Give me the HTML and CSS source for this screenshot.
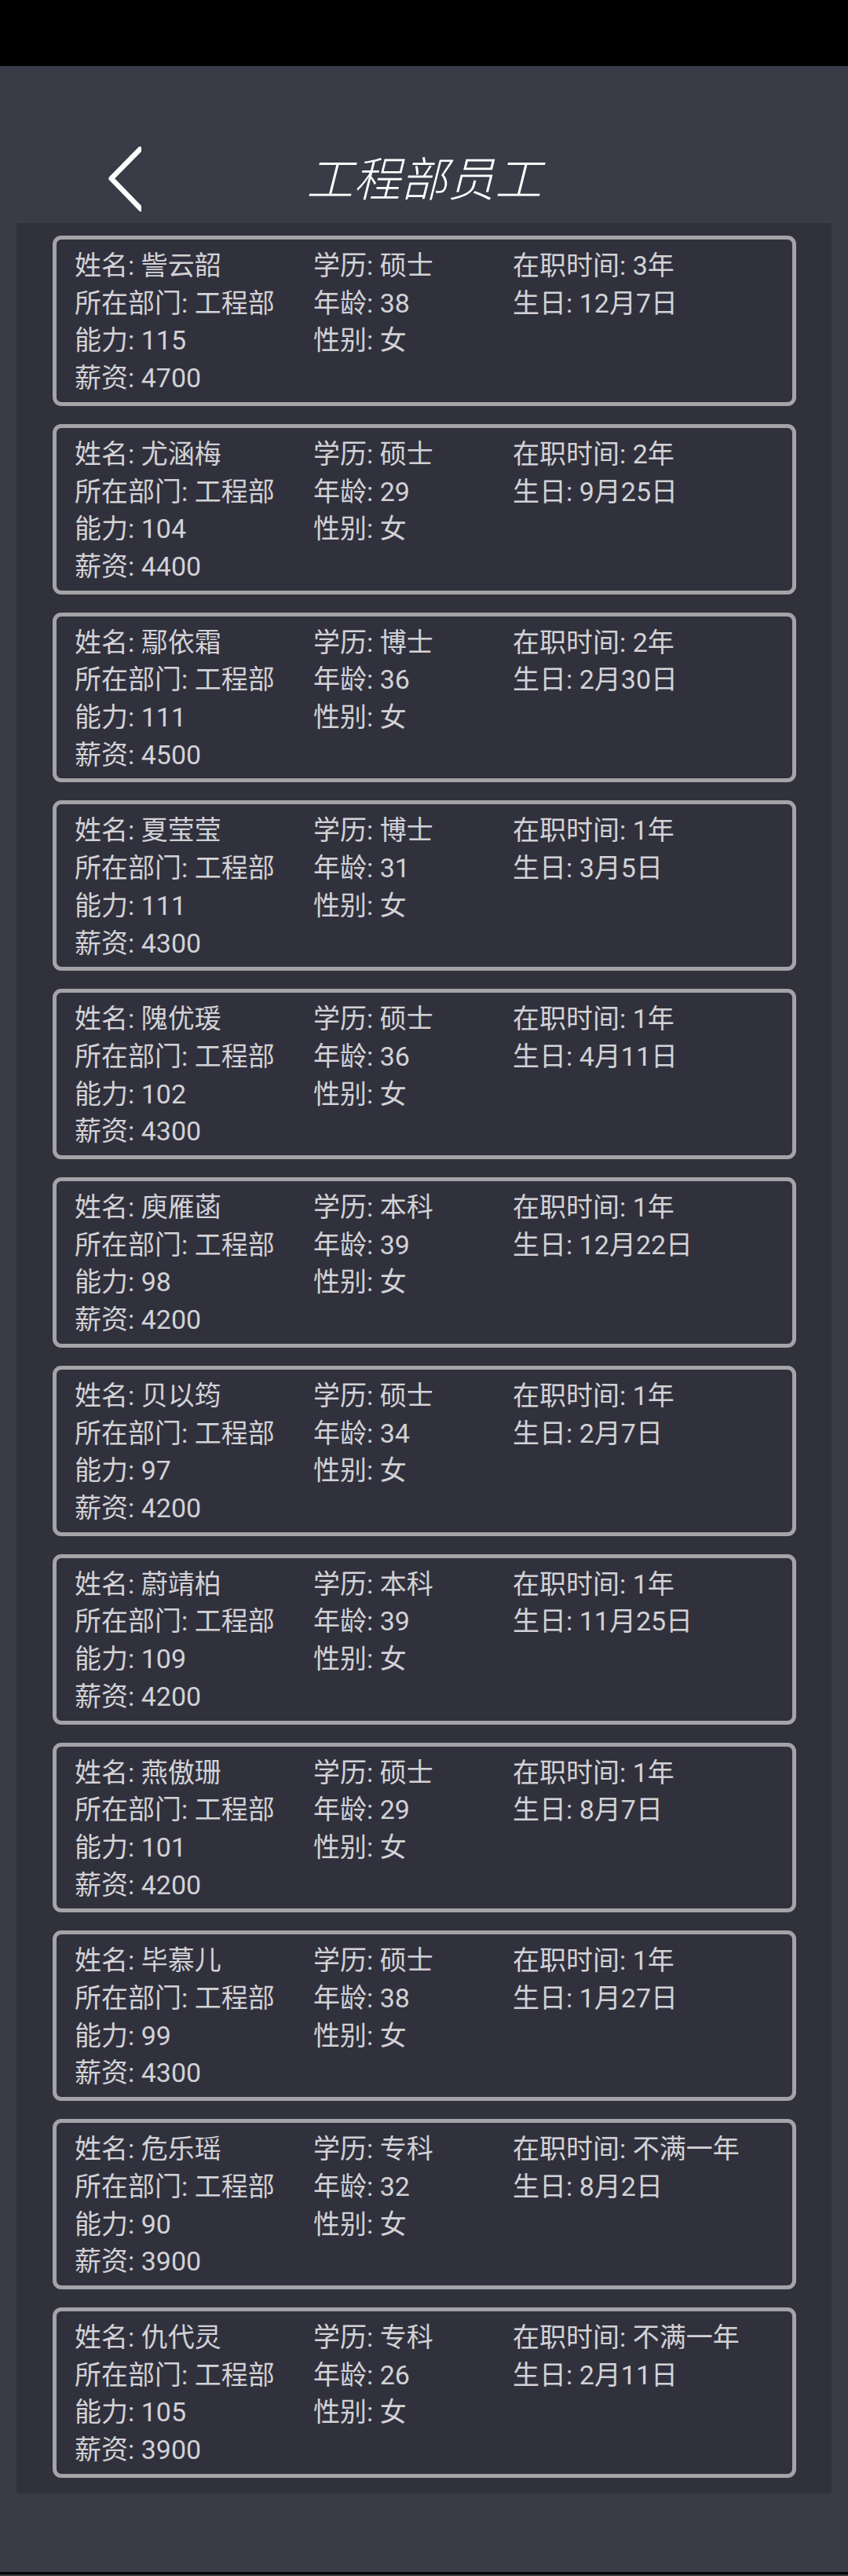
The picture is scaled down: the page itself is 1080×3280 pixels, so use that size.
FILE: index.html
```html
<!DOCTYPE html>
<html lang="zh-CN">
<head>
<meta charset="utf-8">
<title>工程部员工</title>
<link rel="stylesheet" href="styles.css">
</head>
<body>
<div class="statusbar"></div>
<header class="topbar">
  <div class="back">
    <svg width="60" height="90" viewBox="0 0 60 90"><path d="M58.3 7 L21.7 44.3 L59.3 83" fill="none" stroke="#ffffff" stroke-width="6.5" stroke-linecap="round" stroke-linejoin="round"/></svg>
  </div>
  <h1 class="title">工程部员工</h1>
  <div></div>
</header>
<main class="panel">
  <section class="card">
    <span>姓名: 訾云韶</span><span>学历: 硕士</span><span>在职时间: 3年</span>
    <span>所在部门: 工程部</span><span>年龄: 38</span><span>生日: 12月7日</span>
    <span>能力: 115</span><span>性别: 女</span><span></span>
    <span>薪资: 4700</span>
  </section>
  <section class="card">
    <span>姓名: 尤涵梅</span><span>学历: 硕士</span><span>在职时间: 2年</span>
    <span>所在部门: 工程部</span><span>年龄: 29</span><span>生日: 9月25日</span>
    <span>能力: 104</span><span>性别: 女</span><span></span>
    <span>薪资: 4400</span>
  </section>
  <section class="card">
    <span>姓名: 鄢依霜</span><span>学历: 博士</span><span>在职时间: 2年</span>
    <span>所在部门: 工程部</span><span>年龄: 36</span><span>生日: 2月30日</span>
    <span>能力: 111</span><span>性别: 女</span><span></span>
    <span>薪资: 4500</span>
  </section>
  <section class="card">
    <span>姓名: 夏莹莹</span><span>学历: 博士</span><span>在职时间: 1年</span>
    <span>所在部门: 工程部</span><span>年龄: 31</span><span>生日: 3月5日</span>
    <span>能力: 111</span><span>性别: 女</span><span></span>
    <span>薪资: 4300</span>
  </section>
  <section class="card">
    <span>姓名: 隗优瑗</span><span>学历: 硕士</span><span>在职时间: 1年</span>
    <span>所在部门: 工程部</span><span>年龄: 36</span><span>生日: 4月11日</span>
    <span>能力: 102</span><span>性别: 女</span><span></span>
    <span>薪资: 4300</span>
  </section>
  <section class="card">
    <span>姓名: 庾雁菡</span><span>学历: 本科</span><span>在职时间: 1年</span>
    <span>所在部门: 工程部</span><span>年龄: 39</span><span>生日: 12月22日</span>
    <span>能力: 98</span><span>性别: 女</span><span></span>
    <span>薪资: 4200</span>
  </section>
  <section class="card">
    <span>姓名: 贝以筠</span><span>学历: 硕士</span><span>在职时间: 1年</span>
    <span>所在部门: 工程部</span><span>年龄: 34</span><span>生日: 2月7日</span>
    <span>能力: 97</span><span>性别: 女</span><span></span>
    <span>薪资: 4200</span>
  </section>
  <section class="card">
    <span>姓名: 蔚靖柏</span><span>学历: 本科</span><span>在职时间: 1年</span>
    <span>所在部门: 工程部</span><span>年龄: 39</span><span>生日: 11月25日</span>
    <span>能力: 109</span><span>性别: 女</span><span></span>
    <span>薪资: 4200</span>
  </section>
  <section class="card">
    <span>姓名: 燕傲珊</span><span>学历: 硕士</span><span>在职时间: 1年</span>
    <span>所在部门: 工程部</span><span>年龄: 29</span><span>生日: 8月7日</span>
    <span>能力: 101</span><span>性别: 女</span><span></span>
    <span>薪资: 4200</span>
  </section>
  <section class="card">
    <span>姓名: 毕慕儿</span><span>学历: 硕士</span><span>在职时间: 1年</span>
    <span>所在部门: 工程部</span><span>年龄: 38</span><span>生日: 1月27日</span>
    <span>能力: 99</span><span>性别: 女</span><span></span>
    <span>薪资: 4300</span>
  </section>
  <section class="card">
    <span>姓名: 危乐瑶</span><span>学历: 专科</span><span>在职时间: 不满一年</span>
    <span>所在部门: 工程部</span><span>年龄: 32</span><span>生日: 8月2日</span>
    <span>能力: 90</span><span>性别: 女</span><span></span>
    <span>薪资: 3900</span>
  </section>
  <section class="card">
    <span>姓名: 仇代灵</span><span>学历: 专科</span><span>在职时间: 不满一年</span>
    <span>所在部门: 工程部</span><span>年龄: 26</span><span>生日: 2月11日</span>
    <span>能力: 105</span><span>性别: 女</span><span></span>
    <span>薪资: 3900</span>
  </section>
</main>
<div class="bottom-space"></div>
<div class="navbar"></div>
</body>
</html>
```

FILE: styles.css
```css
html, body {
  margin: 0;
  padding: 0;
}
body {
  background: #393c46;
  font-family: Roboto, "Noto Sans CJK SC", sans-serif;
  color: #d2d2d6;
}
.statusbar {
  height: 84px;
  background: #000000;
}
.topbar {
  height: 112px;
  padding-top: 88px;
  display: grid;
  grid-template-columns: 1fr auto 1fr;
  align-items: center;
}
.back {
  padding-left: 120px;
  display: flex;
  align-items: center;
}
.back svg {
  display: block;
}
.title {
  margin: 0 0 8px 0;
  font-family: "Noto Sans CJK SC", sans-serif;
  font-weight: 300;
  font-style: italic;
  font-size: 60px;
  line-height: 1;
  color: #ffffff;
}
.panel {
  margin: 0 21px;
  background: #31313c;
  padding: 16px 45px 20px 46px;
  display: flex;
  flex-direction: column;
  gap: 23px;
}
.card {
  border: 5px solid #a4a4a8;
  border-radius: 11px;
  background: #31313d;
  padding: 10px 20px 6px 23px;
  display: grid;
  grid-template-columns: 304px 254px 1fr;
  font-size: 34px;
  line-height: 47.7px;
  white-space: nowrap;
}
.bottom-space {
  height: 100px;
}
.navbar {
  height: 3px;
  background: #000000;
}
```
